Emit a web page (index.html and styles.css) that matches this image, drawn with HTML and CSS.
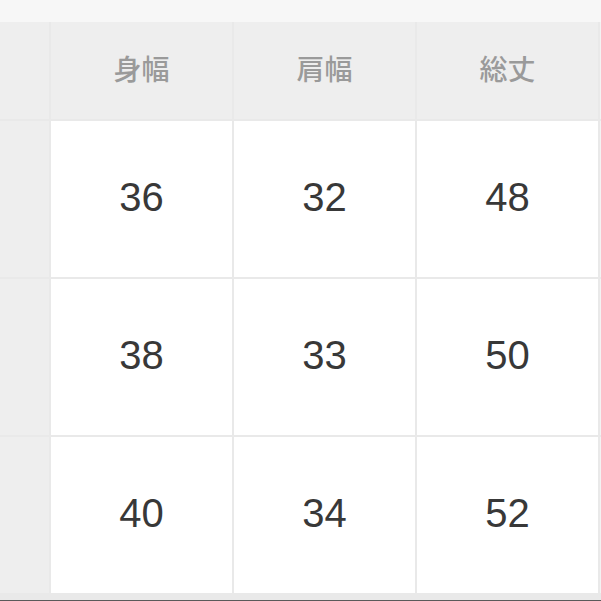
FILE: index.html
```html
<!DOCTYPE html>
<html lang="ja">
<head>
<meta charset="utf-8">
<link rel="stylesheet" href="styles.css">
</head>
<body>
<div class="page">
  <div class="topbar"></div>
  <div class="sheet">
    <div class="side head"></div>
    <div class="cell head">身幅</div>
    <div class="cell head">肩幅</div>
    <div class="cell head">総丈</div>
    <div class="edge"></div>

    <div class="side"></div>
    <div class="cell num">36</div>
    <div class="cell num">32</div>
    <div class="cell num">48</div>
    <div class="edge"></div>

    <div class="side"></div>
    <div class="cell num">38</div>
    <div class="cell num">33</div>
    <div class="cell num">50</div>
    <div class="edge"></div>

    <div class="side"></div>
    <div class="cell num">40</div>
    <div class="cell num">34</div>
    <div class="cell num">52</div>
    <div class="edge"></div>
  </div>
  <div class="bottombar"></div>
</div>
</body>
</html>
```
FILE: styles.css
```css
html, body {
  margin: 0;
  padding: 0;
  background: #f7f7f7;
}
.page {
  width: 601px;
  height: 601px;
  overflow: hidden;
  display: flex;
  flex-direction: column;
}
.topbar {
  height: 22px;
  background: #f7f7f7;
  flex: none;
}
.sheet {
  flex: none;
  display: grid;
  grid-template-columns: 49px 181px 181px 181px 1fr;
  grid-template-rows: 97px 156px 156px 156px;
  column-gap: 2px;
  row-gap: 2px;
  background: #e9e9e9;
  padding-bottom: 7px;
}
.side {
  background: #eeeeee;
}
.edge {
  background: #f3f3f3;
}
.cell {
  display: flex;
  align-items: center;
  justify-content: center;
  background: #ffffff;
}
.cell.head {
  background: #eeeeee;
  color: #9a9a9a;
  font-family: "Noto Sans CJK JP", "Noto Sans", sans-serif;
  font-size: 28px;
  font-weight: 500;
  padding-bottom: 6px;
}
.cell.num {
  font-family: "Liberation Sans", Arial, sans-serif;
  font-size: 40px;
  color: #383838;
  padding-bottom: 3px;
}
.bottombar {
  flex: 1;
  background: #5a5a5a;
}
```
